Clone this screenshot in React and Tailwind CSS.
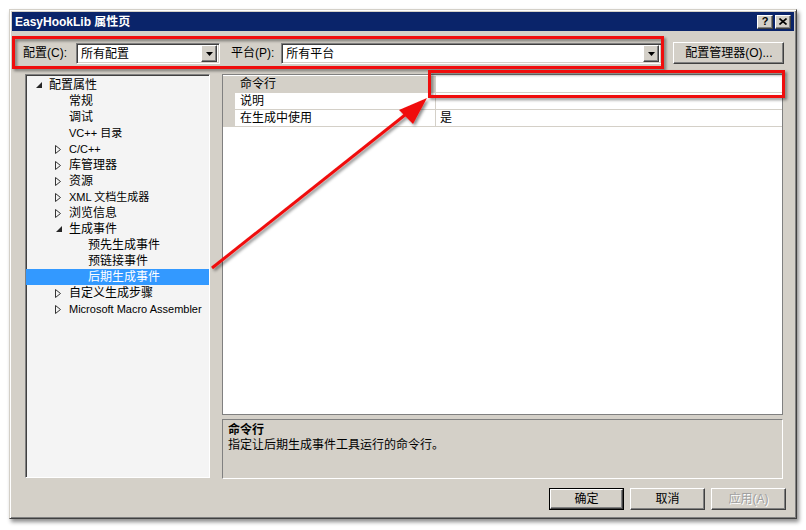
import React from 'react';

const treeItems = [
  { label: '配置属性', level: 0, icon: 'open' },
  { label: '常规', level: 1 },
  { label: '调试', level: 1 },
  { label: 'VC++ 目录', level: 1 },
  { label: 'C/C++', level: 1, icon: 'closed' },
  { label: '库管理器', level: 1, icon: 'closed' },
  { label: '资源', level: 1, icon: 'closed' },
  { label: 'XML 文档生成器', level: 1, icon: 'closed' },
  { label: '浏览信息', level: 1, icon: 'closed' },
  { label: '生成事件', level: 1, icon: 'open' },
  { label: '预先生成事件', level: 2 },
  { label: '预链接事件', level: 2 },
  { label: '后期生成事件', level: 2, selected: true },
  { label: '自定义生成步骤', level: 1, icon: 'closed' },
  { label: 'Microsoft Macro Assembler', level: 1, icon: 'closed' },
];

const levelPad = ['pl-[8px]', 'pl-[28px]', 'pl-[47px]'];

// raised classic button look
const raised =
  'bg-[#d4d0c8] border border-t-white border-l-white border-r-[#404040] border-b-[#404040] shadow-[inset_-1px_-1px_0_#808080]';

const TreeIcon = ({ type }) => {
  if (type === 'open') {
    return (
      <svg width="6" height="6" viewBox="0 0 6 6" className="ml-[2px]">
        <polygon points="6,0 6,6 0,6" fill="#262626" />
      </svg>
    );
  }
  if (type === 'closed') {
    return (
      <svg width="6" height="9" viewBox="0 0 6 9" className="ml-[1px]">
        <polygon points="0.5,0.5 5.5,4.5 0.5,8.5" fill="none" stroke="#333" strokeWidth="1" />
      </svg>
    );
  }
  return null;
};

const Combo = ({ text, width }) => (
  <div
    className={`${width} h-[21px] flex items-center bg-white border border-t-[#808080] border-l-[#808080] border-r-white border-b-white shadow-[inset_1px_1px_0_#404040,inset_-1px_-1px_0_#d4d0c8] pl-[4px] pr-[2px]`}
  >
    <span className="flex-1 text-[12px] leading-[16px] text-black">{text}</span>
    <div className={`w-[16px] h-[17px] flex items-center justify-center ${raised}`}>
      <svg width="7" height="4" viewBox="0 0 7 4">
        <polygon points="0,0 7,0 3.5,4" fill="#000" />
      </svg>
    </div>
  </div>
);

const Btn = ({ children, isDefault, disabled }) => (
  <div className={isDefault ? 'border border-black' : ''}>
    <div
      className={`${isDefault ? 'w-[73px] h-[20px]' : 'w-[75px] h-[22px]'} flex items-center justify-center text-[12px] ${raised} ${
        disabled ? 'text-[#a0a0a0] [text-shadow:1px_1px_0_#fff]' : 'text-black'
      }`}
    >
      {children}
    </div>
  </div>
);

const GridRow = ({ label, value, active }) => (
  <div className="flex h-[17px] border-b border-[#d4d0c8]">
    <div className="w-[12px] bg-[#d4d0c8]" />
    <div className={`w-[201px] pl-[5px] text-[12px] leading-[16px] border-r border-[#d4d0c8] ${active ? 'bg-[#d4d0c8]' : 'bg-white'}`}>
      {label}
    </div>
    <div className="flex-1 pl-[4px] text-[12px] leading-[16px] bg-white">{value}</div>
  </div>
);

export default function App() {
  return (
    <div className="relative w-[806px] h-[530px] bg-white pt-[9px] pl-[9px] font-['Liberation_Sans','Noto_Sans_CJK_SC',sans-serif] text-black">
      <div className="w-[788px] h-[510px] bg-[#d4d0c8] border border-t-[#d4d0c8] border-l-[#d4d0c8] border-r-[#404040] border-b-[#404040] shadow-[inset_1px_1px_0_#fff,inset_-1px_-1px_0_#808080,2px_3px_4px_rgba(0,0,0,0.45)] p-[2px] flex flex-col">
        {/* title bar */}
        <div className="h-[19px] bg-[#0a246a] flex items-center pl-[3px] pr-[3px]">
          <span className="flex-1 text-white font-bold text-[12px] leading-[16px]">EasyHookLib 属性页</span>
          <div className="flex gap-[2px]">
            <div className={`w-[16px] h-[14px] flex items-center justify-center text-[11px] font-bold leading-none ${raised}`}>?</div>
            <div className={`w-[16px] h-[14px] flex items-center justify-center ${raised}`}>
              <svg width="8" height="7" viewBox="0 0 8 7">
                <path d="M0.5 0.5 L7.5 6.5 M7.5 0.5 L0.5 6.5" stroke="#000" strokeWidth="1.6" />
              </svg>
            </div>
          </div>
        </div>

        {/* configuration toolbar */}
        <div className="h-[43px] flex items-start pt-[12px] pl-[11px]">
          <span className="text-[12px] leading-[21px] mr-[9px]">配置(C):</span>
          <Combo text="所有配置" width="w-[144px]" />
          <span className="text-[12px] leading-[21px] ml-[11px] mr-[7px]">平台(P):</span>
          <Combo text="所有平台" width="w-[381px]" />
          <div className={`ml-[11px] -mt-[1px] w-[111px] h-[22px] flex items-center justify-center text-[12px] ${raised}`}>
            配置管理器(O)...
          </div>
        </div>

        {/* main area */}
        <div className="flex gap-[12px] pl-[13px] h-[405px]">
          {/* tree */}
          <div className="w-[185px] h-[404px] bg-[#f4f4f4] border border-t-[#808080] border-l-[#808080] border-r-white border-b-white shadow-[inset_1px_1px_0_#404040] pt-[2px]">
            {treeItems.map((item) => (
              <div
                key={item.label}
                className={`h-[16px] flex items-center ${levelPad[item.level]} ${item.selected ? 'bg-[#3399ff] text-white' : ''}`}
              >
                <div className="w-[15px] flex items-center">
                  <TreeIcon type={item.icon} />
                </div>
                <span className={`leading-[16px] ${/^[A-Za-z]/.test(item.label) ? 'text-[11px]' : 'text-[12px]'}`}>{item.label}</span>
              </div>
            ))}
          </div>

          {/* property grid + description */}
          <div className="w-[561px] flex flex-col gap-[4px]">
            <div className="h-[341px] bg-white border border-[#808080] pt-[1px]">
              <GridRow label="命令行" value="" active />
              <GridRow label="说明" value="" />
              <GridRow label="在生成中使用" value="是" />
            </div>
            <div className="h-[60px] bg-[#d4d0c8] border border-t-[#808080] border-l-[#808080] border-r-white border-b-white pl-[5px] pt-[3px]">
              <div className="text-[12px] font-bold leading-[15px]">命令行</div>
              <div className="text-[12px] leading-[15px]">指定让后期生成事件工具运行的命令行。</div>
            </div>
          </div>
        </div>

        {/* buttons */}
        <div className="flex justify-end gap-[6px] pr-[8px] mt-[9px]">
          <Btn isDefault>确定</Btn>
          <Btn>取消</Btn>
          <Btn disabled>应用(A)</Btn>
        </div>
      </div>

      {/* red annotation overlay */}
      <svg className="absolute left-0 top-0 pointer-events-none" width="806" height="530" viewBox="0 0 806 530">
        <defs>
          <filter id="sh" x="-10%" y="-10%" width="130%" height="130%">
            <feDropShadow dx="2" dy="2" stdDeviation="1.5" floodColor="#000" floodOpacity="0.45" />
          </filter>
        </defs>
        <g filter="url(#sh)">
          <rect x="13.5" y="37.5" width="649" height="30" fill="none" stroke="#f01010" strokeWidth="3" />
          <rect x="429.5" y="71.5" width="354" height="25" fill="none" stroke="#f01010" strokeWidth="3" />
          <line x1="212" y1="268" x2="410" y2="111" stroke="#f01010" strokeWidth="3" />
          <polygon points="427,98 399,110 413,124" fill="#f01010" />
        </g>
      </svg>
    </div>
  );
}
